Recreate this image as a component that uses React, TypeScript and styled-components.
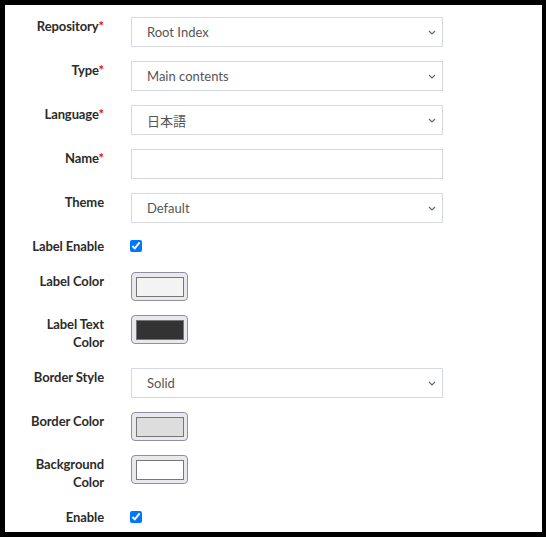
import styled, { createGlobalStyle } from "styled-components"

const GlobalStyle = createGlobalStyle`
    html, body {
        margin: 0;
        padding: 0;
        background: #fff;
    }
    body {
        font-family: Lato, "Noto Sans CJK JP", sans-serif;
    }
`

const Frame = styled.div`
    box-sizing: border-box;
    width: 546px;
    height: 537px;
    border: 5px solid #000;
    border-right-width: 4px;
    background: #fff;
    overflow: hidden;
    padding-top: 12px;
`

const Form = styled.div`
    display: grid;
    grid-template-columns: 99px 312px;
    column-gap: 27px;
    row-gap: 14px;
    align-items: start;
`

const Label = styled.div`
    font-size: 13px;
    font-weight: 700;
    line-height: 18px;
    padding: 0 0 3px;
    color: #2b2b2b;
    text-align: right;
    letter-spacing: -0.1px;
`

const Required = styled.span`
    color: #f00;
`

const SelectBox = styled.div`
    box-sizing: border-box;
    height: 30px;
    border: 1px solid #d6d9de;
    display: flex;
    align-items: center;
    justify-content: space-between;
    padding: 0 6px 0 15px;
    font-size: 13px;
    color: #555;
    font-family: Lato, "Noto Sans CJK JP", sans-serif;
`

const TextBox = styled.div`
    box-sizing: border-box;
    height: 30px;
    border: 1px solid #d6d9de;
`

const CheckField = styled.div`
    height: 21px;
    display: flex;
    align-items: flex-start;
`

const Check = styled.input`
    width: 12px;
    height: 12px;
    margin: 3px 0 0 -1px;
    accent-color: #0075ff;
`

const Swatch = styled.div`
    box-sizing: border-box;
    width: 57px;
    height: 29px;
    border: 1px solid #8f8f9d;
    border-radius: 4px;
    background: #e9e9ed;
    display: flex;
    align-items: center;
    justify-content: center;
`

const SwatchColor = styled.span<{ $color: string }>`
    box-sizing: border-box;
    width: 48px;
    height: 20px;
    border: 1px solid #777;
    background: ${(p) => p.$color};
`

function Chevron() {
    return (
        <svg width="8" height="5" viewBox="0 0 8 5">
            <path d="M1 1 L4 4 L7 1" fill="none" stroke="#666" strokeWidth="1.1" />
        </svg>
    )
}

function Select({ value }: { value: string }) {
    return (
        <SelectBox>
            <span>{value}</span>
            <Chevron />
        </SelectBox>
    )
}

function Color({ color }: { color: string }) {
    return (
        <Swatch>
            <SwatchColor $color={color} />
        </Swatch>
    )
}

function Checkbox() {
    return (
        <CheckField>
            <Check type="checkbox" defaultChecked />
        </CheckField>
    )
}

export default function App() {
    return (
        <>
            <GlobalStyle />
            <Frame>
                <Form>
                    <Label>Repository<Required>*</Required></Label>
                    <Select value="Root Index" />

                    <Label>Type<Required>*</Required></Label>
                    <Select value="Main contents" />

                    <Label>Language<Required>*</Required></Label>
                    <Select value="日本語" />

                    <Label>Name<Required>*</Required></Label>
                    <TextBox />

                    <Label>Theme</Label>
                    <Select value="Default" />

                    <Label>Label Enable</Label>
                    <Checkbox />

                    <Label>Label Color</Label>
                    <Color color="#f3f3f3" />

                    <Label>Label Text<br />Color</Label>
                    <Color color="#333333" />

                    <Label>Border Style</Label>
                    <Select value="Solid" />

                    <Label>Border Color</Label>
                    <Color color="#dddddd" />

                    <Label>Background<br />Color</Label>
                    <Color color="#ffffff" />

                    <Label>Enable</Label>
                    <Checkbox />
                </Form>
            </Frame>
        </>
    )
}
